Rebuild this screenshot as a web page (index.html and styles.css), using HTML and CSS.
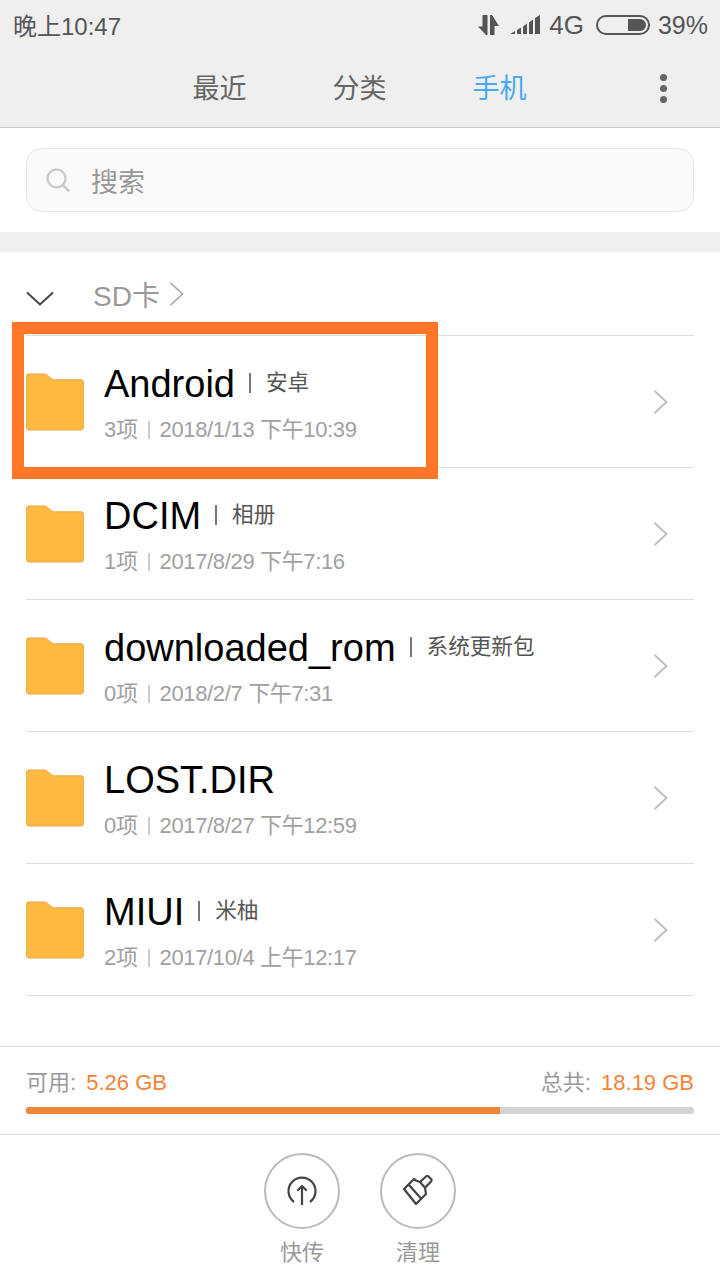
FILE: index.html
```html
<!DOCTYPE html>
<html lang="zh-CN">
<head>
    <meta charset="UTF-8">
    <meta name="viewport" content="width=device-width, initial-scale=1.0">
    <title>文件管理</title>
    <link rel="stylesheet" href="styles.css">
</head>
<body>
    <div class="page">
        <header class="top">
            <div class="status">
                <span class="status__time">晚上10:47</span>
                <div class="status__right">
                    <svg class="icon-data" width="21" height="20" viewBox="0 0 21 20"><path d="M0 11.500h4.500V0h5v20H8zM12 20V0h2l7 11h-4.500v9z" fill="#555"/></svg>
                    <svg class="icon-signal" width="30" height="20" viewBox="0 0 30 20"><path d="M0 19l5-3v3zM7 15l4-2.500V19H7zM13 11.500l4-3V19h-4zM19 7.500l4-3V19h-4zM25 3l5-3v19h-5z" fill="#555"/></svg>
                    <span class="status__net">4G</span>
                    <svg class="icon-battery" width="54" height="20" viewBox="0 0 54 20"><rect x="1" y="1" width="52" height="18" rx="9" fill="none" stroke="#555" stroke-width="2"/><path d="M32 4h12a6 6 0 0 1 0 12H32z" fill="#555"/></svg>
                    <span class="status__pct">39%</span>
                </div>
            </div>
            <nav class="tabs">
                <span class="tab">最近</span>
                <span class="tab">分类</span>
                <span class="tab tab--on">手机</span>
                <span class="tabs__more"><i></i><i></i><i></i></span>
            </nav>
        </header>

        <div class="search-wrap">
            <div class="search">
                <svg width="24" height="24" viewBox="0 0 24 24"><circle cx="10.500" cy="10.500" r="9" fill="none" stroke="#ccc" stroke-width="2.500"/><path d="M17 17l6.500 6.500" stroke="#ccc" stroke-width="2.500" fill="none"/></svg>
                <span>搜索</span>
            </div>
        </div>

        <div class="crumbs">
            <svg class="crumbs__toggle" width="28" height="15" viewBox="0 0 28 15"><path d="M1 1.500l13 12 13-12" fill="none" stroke="#444" stroke-width="2"/></svg>
            <span class="crumbs__text">SD卡</span>
            <svg width="15" height="24" viewBox="0 0 16 26"><path d="M1.500 1l13 12-13 12" fill="none" stroke="#aaa" stroke-width="1.800"/></svg>
        </div>

        <ul class="files">
            <li class="file">
                <svg class="folder" width="58" height="58" viewBox="0 0 60 60"><use href="#folder"/></svg>
                <div class="file__body">
                    <div class="file__name">Android<span class="file__alias">安卓</span></div>
                    <div class="file__meta"><span class="file__count">3项</span>2018/1/13 下午10:39</div>
                </div>
                <svg class="chev" width="15" height="24" viewBox="0 0 16 26"><path d="M1.500 1l13 12-13 12" fill="none" stroke="#bbb" stroke-width="2"/></svg>
            </li>
            <li class="file">
                <svg class="folder" width="58" height="58" viewBox="0 0 60 60"><use href="#folder"/></svg>
                <div class="file__body">
                    <div class="file__name">DCIM<span class="file__alias">相册</span></div>
                    <div class="file__meta"><span class="file__count">1项</span>2017/8/29 下午7:16</div>
                </div>
                <svg class="chev" width="15" height="24" viewBox="0 0 16 26"><path d="M1.500 1l13 12-13 12" fill="none" stroke="#bbb" stroke-width="2"/></svg>
            </li>
            <li class="file">
                <svg class="folder" width="58" height="58" viewBox="0 0 60 60"><use href="#folder"/></svg>
                <div class="file__body">
                    <div class="file__name">downloaded_rom<span class="file__alias">系统更新包</span></div>
                    <div class="file__meta"><span class="file__count">0项</span>2018/2/7 下午7:31</div>
                </div>
                <svg class="chev" width="15" height="24" viewBox="0 0 16 26"><path d="M1.500 1l13 12-13 12" fill="none" stroke="#bbb" stroke-width="2"/></svg>
            </li>
            <li class="file">
                <svg class="folder" width="58" height="58" viewBox="0 0 60 60"><use href="#folder"/></svg>
                <div class="file__body">
                    <div class="file__name">LOST.DIR</div>
                    <div class="file__meta"><span class="file__count">0项</span>2017/8/27 下午12:59</div>
                </div>
                <svg class="chev" width="15" height="24" viewBox="0 0 16 26"><path d="M1.500 1l13 12-13 12" fill="none" stroke="#bbb" stroke-width="2"/></svg>
            </li>
            <li class="file">
                <svg class="folder" width="58" height="58" viewBox="0 0 60 60"><use href="#folder"/></svg>
                <div class="file__body">
                    <div class="file__name">MIUI<span class="file__alias">米柚</span></div>
                    <div class="file__meta"><span class="file__count">2项</span>2017/10/4 上午12:17</div>
                </div>
                <svg class="chev" width="15" height="24" viewBox="0 0 16 26"><path d="M1.500 1l13 12-13 12" fill="none" stroke="#bbb" stroke-width="2"/></svg>
            </li>
        </ul>

        <section class="storage">
            <div class="storage__labels">
                <span>可用: <b>5.26 GB</b></span>
                <span>总共: <b>18.19 GB</b></span>
            </div>
            <div class="storage__bar"><div class="storage__used" style="width: 71%"></div></div>
        </section>

        <footer class="actions">
            <div class="action">
                <div class="action__ring">
                    <svg width="32" height="32" viewBox="0 0 32 32"><path d="M8 27A13.500 13.500 0 1 1 24 27" fill="none" stroke="#444" stroke-width="2.200"/><path d="M16 30V11M11.300 15.700L16 11l4.700 4.700" fill="none" stroke="#444" stroke-width="2.200"/></svg>
                </div>
                <span>快传</span>
            </div>
            <div class="action">
                <div class="action__ring">
                    <svg width="32" height="32" viewBox="0 0 32 32"><path d="M2 14L12 4l2 1.500 4 1.500 5 5.700 1 6.300-10 10zM6.500 9.500l13 14.500" fill="none" stroke="#444" stroke-width="2.200" stroke-linejoin="round"/><path d="M18 7l6-5.500c1-.8 1.700-.8 2.500 0l2.500 2.500c.8.800.8 1.500 0 2.500L23 12.700" fill="none" stroke="#444" stroke-width="2.200"/></svg>
                </div>
                <span>清理</span>
            </div>
        </footer>

        <div class="highlight"></div>
    </div>

    <svg width="0" height="0" class="defs">
        <defs>
            <g id="folder">
                <path d="M2 1h17c2 0 3 1 4.500 2.500L28 7h29a2.500 2.500 0 0 1 2.500 2.500v47a2.500 2.500 0 0 1-2.500 2.500H3a2.500 2.500 0 0 1-2.500-2.500V3A2.500 2.500 0 0 1 2 1z" fill="#ffb840" stroke="#e8a94a" stroke-width="1"/>
            </g>
        </defs>
    </svg>
</body>
</html>
```

FILE: styles.css
```css
* {
    box-sizing: border-box;
}
html, body {
    margin: 0;
    padding: 0;
    background: #fff;
}
body {
    font-family: "Liberation Sans", "Noto Sans CJK SC", sans-serif;
}
.page {
    position: relative;
    width: 720px;
    height: 1280px;
    overflow: hidden;
}
.defs {
    position: absolute;
}

/* top bar */
.top {
    height: 128px;
    background: #efefef;
    border-bottom: 1px solid #c8c8c8;
}
.status {
    height: 48px;
    padding: 0 12px 0 13px;
    display: flex;
    align-items: center;
    justify-content: space-between;
    color: #555;
    font-size: 24px;
}
.status__right {
    display: flex;
    align-items: center;
    padding-top: 2px;
}
.icon-data {
    margin-right: 11px;
}
.status__net {
    font-size: 26px;
    margin-left: 9px;
}
.icon-battery {
    margin-left: 12px;
}
.status__pct {
    font-size: 25px;
    margin-left: 8px;
}
.tabs {
    position: relative;
    height: 79px;
    display: flex;
    justify-content: center;
    align-items: center;
    gap: 86px;
    padding-bottom: 3px;
    padding-right: 1px;
    font-size: 27px;
    color: #666;
}
.tab--on {
    color: #47a9f2;
}
.tabs__more {
    position: absolute;
    left: 660px;
    top: 26px;
    display: flex;
    flex-direction: column;
    gap: 4px;
}
.tabs__more i {
    display: block;
    width: 7px;
    height: 7px;
    border-radius: 50%;
    background: #666;
}

/* search */
.search-wrap {
    height: 124px;
    padding: 20px 26px;
    border-bottom: 20px solid #efefef;
}
.search {
    height: 64px;
    padding-left: 19px;
    display: flex;
    align-items: center;
    gap: 21px;
    background: #fafafa;
    border: 1px solid #e4e4e4;
    border-radius: 16px;
    font-size: 27px;
    color: #999;
}

/* breadcrumb */
.crumbs {
    height: 83px;
    padding-left: 26px;
    display: flex;
    align-items: center;
    color: #999;
    font-size: 28px;
}
.crumbs__toggle {
    margin-top: 10px;
    margin-right: 39px;
}
.crumbs__text + svg {
    margin-left: 9px;
}

/* file list */
.files {
    list-style: none;
    margin: 0 26px;
    padding: 0;
    border-top: 1px solid #dedede;
}
.file {
    height: 132px;
    display: flex;
    align-items: center;
    border-bottom: 1px solid #dedede;
}
.folder {
    flex: none;
    margin-right: 20px;
}
.file__body {
    flex: 1;
    min-width: 0;
}
.file__name {
    display: flex;
    align-items: center;
    padding-top: 1px;
    font-size: 38px;
    line-height: 48px;
    color: #000;
}
.file__alias {
    display: flex;
    align-items: center;
    margin: -2px 0 0 14px;
    font-size: 21.600px;
    color: #555;
}
.file__alias::before {
    content: "";
    width: 2px;
    height: 20px;
    margin-right: 15px;
    background: #777;
}
.file__meta {
    margin-top: 7px;
    font-size: 22px;
    letter-spacing: -0.350px;
    line-height: 30px;
    color: #a0a0a0;
    display: flex;
    align-items: center;
}
.file__count {
    display: flex;
    align-items: center;
}
.file__count::after {
    content: "";
    width: 2px;
    height: 18px;
    margin: 0 10px;
    background: #ccc;
}
.chev {
    flex: none;
    margin-right: 26px;
}

/* storage */
.storage {
    margin-top: 50px;
    height: 89px;
    padding: 22px 26px 0;
    border-top: 1px solid #dedede;
    border-bottom: 1px solid #dedede;
}
.storage__labels {
    display: flex;
    justify-content: space-between;
    font-size: 22px;
    line-height: 28px;
    color: #999;
}
.storage__labels b {
    margin-left: 4px;
    font-weight: normal;
    color: #f08437;
}
.storage__bar {
    margin-top: 10px;
    height: 7px;
    border-radius: 3px;
    background: #d4d4d4;
    overflow: hidden;
}
.storage__used {
    height: 100%;
    background: #f08437;
}

/* bottom actions */
.actions {
    display: flex;
    justify-content: center;
    gap: 40px;
    padding-top: 18px;
}
.action {
    display: flex;
    flex-direction: column;
    align-items: center;
    font-size: 22px;
    color: #999;
}
.action__ring {
    width: 76px;
    height: 76px;
    margin-bottom: 5px;
    border: 2px solid #bbb;
    border-radius: 50%;
    display: flex;
    align-items: center;
    justify-content: center;
}

/* annotation drawn over the first row */
.highlight {
    position: absolute;
    left: 12px;
    top: 322px;
    width: 426px;
    height: 157px;
    border: 12px solid #ff7629;
}
```
